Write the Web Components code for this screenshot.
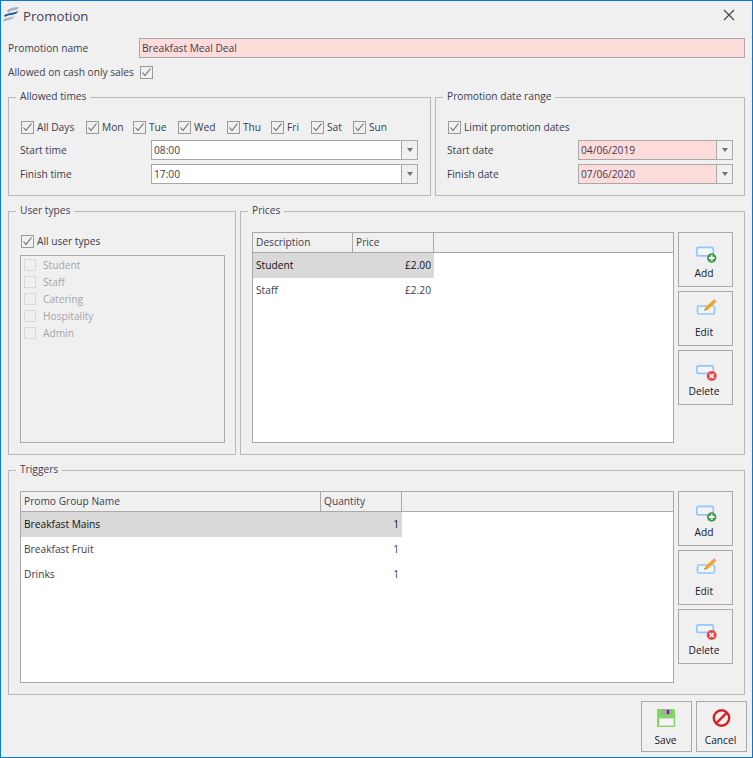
<!DOCTYPE html>
<html>
<head>
<meta charset="utf-8">
<title>Promotion</title>
<style>
html, body { margin: 0; padding: 0; background: #f0f0f0; }
body { font: 10.2px "Open Sans", "Noto Sans", sans-serif; color: #3c3c4a; }
.row { display: flex; align-items: center; }
.lbl { width: 131px; flex: none; }
</style>
</head>
<body>
<x-window>
	<div class="row" style="height:20px;margin-bottom:4px"><span class="lbl" style="color:#404050">Promotion name</span><x-field required style="flex:1">Breakfast Meal Deal</x-field></div>
	<div class="row" style="height:20px;margin-bottom:8px"><span class="lbl" style="width:132px;color:#404050">Allowed on cash only sales</span><x-check checked></x-check></div>

	<div style="display:flex;gap:4px;height:106px;margin-bottom:8px">
		<x-group label="Allowed times" style="width:423px">
			<div class="row" style="height:20px;margin-top:12px;padding-left:1px;">
				<x-check checked style="width:65px">All Days</x-check>
				<x-check checked style="width:47px">Mon</x-check>
				<x-check checked style="width:45px">Tue</x-check>
				<x-check checked style="width:49px">Wed</x-check>
				<x-check checked style="width:44px">Thu</x-check>
				<x-check checked style="width:40px">Fri</x-check>
				<x-check checked style="width:42px">Sat</x-check>
				<x-check checked>Sun</x-check>
			</div>
			<div class="row" style="height:20px;margin-top:3px"><span class="lbl">Start time</span><x-field combo style="width:267px">08:00</x-field></div>
			<div class="row" style="height:20px;margin-top:4px"><span class="lbl">Finish time</span><x-field combo style="width:267px">17:00</x-field></div>
		</x-group>
		<x-group label="Promotion date range" style="flex:1">
			<div class="row" style="height:20px;margin-top:12px;padding-left:1px"><x-check checked>Limit promotion dates</x-check></div>
			<div class="row" style="height:20px;margin-top:3px"><span class="lbl">Start date</span><x-field combo required style="width:155px">04/06/2019</x-field></div>
			<div class="row" style="height:20px;margin-top:4px"><span class="lbl">Finish date</span><x-field combo required style="width:155px">07/06/2020</x-field></div>
		</x-group>
	</div>

	<div style="display:flex;gap:4px;height:251px;margin-bottom:8px">
		<x-group label="User types" style="width:228px">
			<div class="row" style="height:20px;margin-top:12px;padding-left:1px"><x-check checked>All user types</x-check></div>
			<div style="box-sizing:border-box;width:205px;height:188px;margin-top:4px;border:1px solid #a9a9a9;padding:2px 3px;display:flex;flex-direction:column;gap:3px">
				<x-check disabled>Student</x-check>
				<x-check disabled>Staff</x-check>
				<x-check disabled>Catering</x-check>
				<x-check disabled>Hospitality</x-check>
				<x-check disabled>Admin</x-check>
			</div>
		</x-group>
		<x-group label="Prices" style="flex:1">
			<div style="display:flex;gap:4px;margin-top:13px">
				<x-grid style="width:422px;height:211px" cols='[["Description",100],["Price",81]]' rows='[["Student","£2.00"],["Staff","£2.20"]]'></x-grid>
				<x-tool-stack>
					<x-tool-button icon="add">Add</x-tool-button>
					<x-tool-button icon="edit">Edit</x-tool-button>
					<x-tool-button icon="del">Delete</x-tool-button>
				</x-tool-stack>
			</div>
		</x-group>
	</div>

	<x-group label="Triggers" style="height:232px;">
		<div style="display:flex;gap:4px;margin-top:13px">
			<x-grid style="width:654px;height:192px" cols='[["Promo Group Name",300],["Quantity",81]]' rows='[["Breakfast Mains","1"],["Breakfast Fruit","1"],["Drinks","1"]]'></x-grid>
			<x-tool-stack>
				<x-tool-button icon="add">Add</x-tool-button>
				<x-tool-button icon="edit">Edit</x-tool-button>
				<x-tool-button icon="del">Delete</x-tool-button>
			</x-tool-stack>
		</div>
	</x-group>

	<div style="display:flex;justify-content:flex-end;gap:4px;margin-top:6px;margin-right:-2px">
		<x-tool-button small icon="save">Save</x-tool-button>
		<x-tool-button small icon="cancel">Cancel</x-tool-button>
	</div>
</x-window>
<script>
const base = `:host { font-family: "Open Sans", "Noto Sans", sans-serif; font-size: 10.2px; box-sizing: border-box; }`;

const icons = {
	add: `<svg width="27" height="24" viewBox="0 0 27 24"><rect x="4.800" y="8.400" width="16.500" height="8.500" rx="1.500" fill="#f4f4f4" stroke="#90c8fc" stroke-width="1.700"/><circle cx="19.700" cy="19" r="4.700" fill="#3e9e48"/><path d="M16.900 19h5.600M19.700 16.200v5.600" stroke="#fff" stroke-width="1.800"/></svg>`,
	edit: `<svg width="27" height="24" viewBox="0 0 27 24"><rect x="5.500" y="8" width="17" height="8" rx="1.500" fill="#f4f4f4" stroke="#90c8fc" stroke-width="1.700"/><path d="M12.500 12.500l1-3.200 7.500-7 2.300 2.500-7.500 7z" fill="#f6a21e"/><path d="M12.500 12.500l.4-1.500 1.200 1.100z" fill="#444"/><path d="M21 2.300l1.300-1.300 2.300 2.400-1.300 1.400z" fill="#e89a9a"/></svg>`,
	del: `<svg width="27" height="24" viewBox="0 0 27 24"><rect x="4.800" y="8.900" width="16.500" height="7.500" rx="1.500" fill="#f4f4f4" stroke="#90c8fc" stroke-width="1.700"/><circle cx="19.700" cy="19" r="5" fill="#ef4a4a"/><path d="M17.700 17l4 4M21.700 17l-4 4" stroke="#fff" stroke-width="1.600"/></svg>`,
	save: `<svg width="19" height="19" viewBox="0 0 19 19"><path d="M0 0h17l1 1v17H0z" fill="#7ddc5a"/><rect x="4" y="0" width="11" height="6" fill="#a9a6aa"/><rect x="10" y="1" width="2" height="4" fill="#453a48"/><rect x="2" y="9" width="15" height="8" fill="#d9d9d9"/><rect x="3" y="10" width="13" height="6" fill="#f4f4f4"/></svg>`,
	cancel: `<svg width="19" height="19" viewBox="0 0 19 19"><circle cx="9.500" cy="9" r="7.700" fill="none" stroke="#d81f26" stroke-width="2.400"/><path d="M4 14.500L15 3.500" stroke="#d81f26" stroke-width="2.400"/></svg>`
};

class XWindow extends HTMLElement {
	constructor() {
		super();
		this.attachShadow({mode: 'open'}).innerHTML = `
		<style>${base}
		:host { display: flex; flex-direction: column; width: 753px; height: 758px; border: 1px solid #0a78d2; background: #f0f0f0; color: #3c3c4a; overflow: hidden; }
		.title { display: flex; align-items: center; height: 30px; padding: 0 17px 0 1px; flex: none; margin-top: -1px; }
		.title svg { flex: none; }
		.title span { font-size: 13.200px; margin: 2px 0 0 3px; flex: 1; color: #404050; }
		.body { flex: 1; padding: 8px 7px 0; display: flex; flex-direction: column; }
		</style>
		<div class="title">
			<svg width="18" height="18" viewBox="0 0 18 18"><path d="M5 5C7 2 12 1 17 1L15 4C11 4 8 5 6 7z" fill="#a9b2c4"/><path d="M2 9.500C6 6.500 11 7.500 16.500 5L14.500 7.500C11 9.500 6 8.500 3 11z" fill="#1f4fa8"/><path d="M1 16L2 13C5 11 9 12 13 10C11 14 5 14 1 16z" fill="#b0b6c2"/></svg>
			<span>Promotion</span>
			<svg width="12" height="12" viewBox="0 0 12 12"><path d="M1 1l10 10M11 1L1 11" stroke="#444" stroke-width="1.100"/></svg>
		</div>
		<div class="body"><slot></slot></div>`;
	}
}
customElements.define('x-window', XWindow);

class XGroup extends HTMLElement {
	constructor() {
		super();
		this.attachShadow({mode: 'open'}).innerHTML = `
		<style>${base}
		:host { display: block; }
		fieldset { box-sizing: border-box; height: 100%; margin: 0; padding: 0 10px 0 11px; border: 1px solid #b9b9b9; }
		legend { margin-left: -4px; padding: 0 4px 2px; line-height: 13px; color: #404050; }
		</style>
		<fieldset><legend>${this.getAttribute('label')}</legend><slot></slot></fieldset>`;
	}
}
customElements.define('x-group', XGroup);

class XCheck extends HTMLElement {
	constructor() {
		super();
		const on = this.hasAttribute('checked');
		this.attachShadow({mode: 'open'}).innerHTML = `
		<style>${base}
		:host { display: inline-flex; align-items: center; gap: 3px; height: 14px; white-space: nowrap; color: #3c3c4a; }
		:host([disabled]) { color: #a4a4a8; gap: 7px; }
		.box { box-sizing: border-box; width: 13px; height: 13px; border: 1px solid #999; background: #f0f0f0; flex: none; display: block; }
		:host([disabled]) .box { border-color: #d8d8d8; width: 12px; height: 12px; }
		svg { display: block; }
		</style>
		<span class="box">${on ? '<svg width="11" height="11" viewBox="0 0 11 11"><path d="M1.500 5.500l2.500 3 5.500-7" fill="none" stroke="#666" stroke-width="1.100"/></svg>' : ''}</span>
		<slot></slot>`;
	}
}
customElements.define('x-check', XCheck);

class XField extends HTMLElement {
	constructor() {
		super();
		const combo = this.hasAttribute('combo');
		this.attachShadow({mode: 'open'}).innerHTML = `
		<style>${base}
		:host { display: flex; box-sizing: border-box; height: 20px; border: 1px solid #a9a9a9; background: #fff; color: #3c3c4a; }
		:host([required]) { background: #ffdcdc; }
		.val { flex: 1; padding-left: 2px; line-height: 18px; white-space: nowrap; }
		.btn { width: 15px; background: #f0f0f0; border-left: 1px solid #a9a9a9; display: flex; align-items: center; justify-content: center; }
		.btn i { width: 0; height: 0; border: 3.500px solid transparent; border-top: 4px solid #707070; border-bottom: 0; }
		</style>
		<div class="val"><slot></slot></div>${combo ? '<div class="btn"><i></i></div>' : ''}`;
	}
}
customElements.define('x-field', XField);

class XGrid extends HTMLElement {
	constructor() {
		super();
		const cols = JSON.parse(this.getAttribute('cols'));
		const rows = JSON.parse(this.getAttribute('rows'));
		const w = cols.map(c => c[1] + 'px').join(' ');
		this.attachShadow({mode: 'open'}).innerHTML = `
		<style>${base}
		:host { display: block; box-sizing: border-box; border: 1px solid #a9a9a9; background: #fff; }
		.head { display: grid; grid-template-columns: ${w} 1fr; height: 20px; background: #f0f0f0; border-bottom: 1px solid #a9a9a9; box-sizing: border-box; color: #404050; }
		.head div { border-right: 1px solid #a9a9a9; padding-left: 3px; line-height: 19px; }
		.head div:last-child { border: 0; }
		.rows { display: grid; grid-template-columns: ${w}; grid-auto-rows: 25px; }
		.rows div { line-height: 25px; padding: 0 3px; color: #3c3c4a; }
		.rows .num { text-align: right; }
		.rows .sel { background: #d9d9d9; color: #111; }
		</style>
		<div class="head">${cols.map(c => `<div>${c[0]}</div>`).join('')}<div></div></div>
		<div class="rows">${rows.map((r, i) => `<div class="${i ? '' : 'sel'}">${r[0]}</div><div class="num ${i ? '' : 'sel'}">${r[1]}</div>`).join('')}</div>`;
	}
}
customElements.define('x-grid', XGrid);

class XToolButton extends HTMLElement {
	constructor() {
		super();
		this.attachShadow({mode: 'open'}).innerHTML = `
		<style>${base}
		:host { display: flex; flex-direction: column; align-items: center; justify-content: flex-end; box-sizing: border-box; width: 55px; height: 55px; border: 1px solid #a9a9a9; color: #15152a; padding-bottom: 6px; }
		:host([small]) { width: 51px; height: 51px; padding-bottom: 4px; }
		.ic { height: 24px; margin-bottom: 3px; }
		:host([small]) .ic { height: 20px; margin-bottom: 4px; }
		.txt { margin-right: 3px; }
		:host([small]) .txt { margin-right: 2px; }
		svg { display: block; }
		</style>
		<div class="ic">${icons[this.getAttribute('icon')]}</div><span class="txt"><slot></slot></span>`;
	}
}
customElements.define('x-tool-button', XToolButton);

class XToolStack extends HTMLElement {
	constructor() {
		super();
		this.attachShadow({mode: 'open'}).innerHTML = `
		<style>:host { display: flex; flex-direction: column; gap: 4px; flex: none; }</style><slot></slot>`;
	}
}
customElements.define('x-tool-stack', XToolStack);
</script>
</body>
</html>
